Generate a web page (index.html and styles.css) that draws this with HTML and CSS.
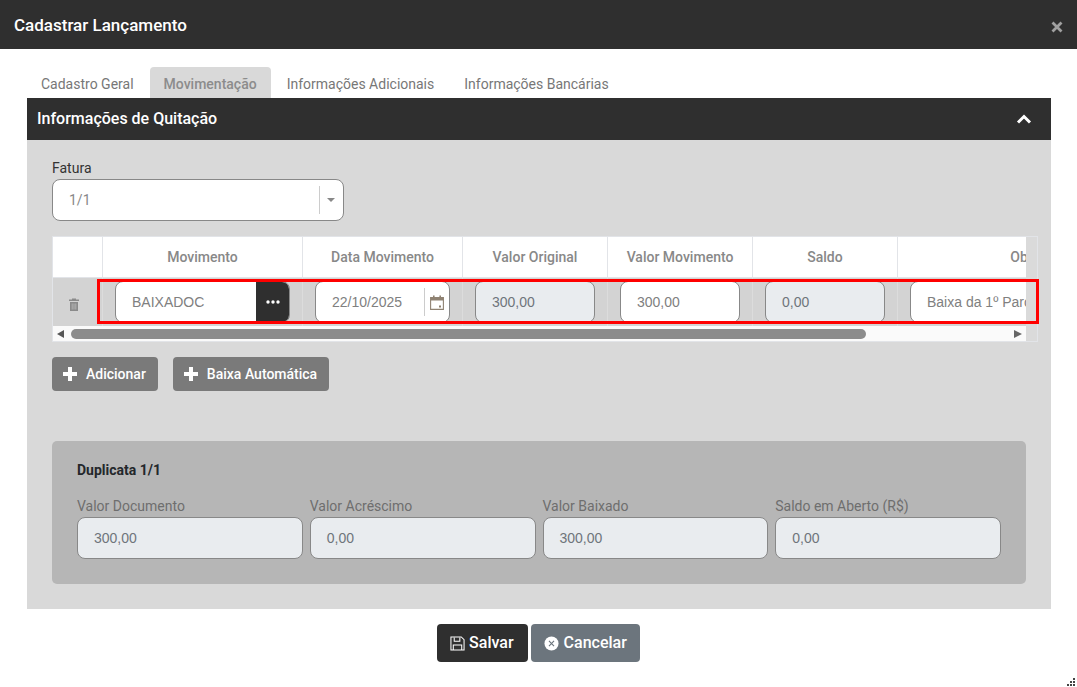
FILE: index.html
```html
<!DOCTYPE html>
<html lang="pt-BR">
<head>
<meta charset="utf-8">
<title>Cadastrar Lançamento</title>
<link rel="stylesheet" href="styles.css">
</head>
<body>
<div class="modal">
  <header class="modal-head">
    <h1 class="modal-title">Cadastrar Lançamento</h1>
    <svg class="close" viewBox="0 0 12 12" width="12" height="12"><path d="M1.5 1.5l9 9M10.5 1.5l-9 9" stroke="#a0a0a0" stroke-width="2.8" fill="none"/></svg>
  </header>
  <nav class="tabs">
    <span class="tab">Cadastro Geral</span>
    <span class="tab tab-active">Movimentação</span>
    <span class="tab">Informações Adicionais</span>
    <span class="tab">Informações Bancárias</span>
  </nav>
  <section class="panel">
    <div class="panel-head">
      <h2 class="panel-title">Informações de Quitação</h2>
      <svg class="chev" viewBox="0 0 16 10" width="16" height="10"><path d="M2 8.5l6-6 6 6" stroke="#fff" stroke-width="3" fill="none"/></svg>
    </div>
    <div class="panel-body">
      <label class="label label-dark">Fatura</label>
      <div class="select">
        <span class="select-value">1/1</span>
        <span class="select-sep"></span>
        <span class="select-caret"></span>
      </div>
      <div class="grid">
        <div class="grid-view">
          <div class="grid-row grid-head">
            <div class="cell"></div>
            <div class="cell">Movimento</div>
            <div class="cell">Data Movimento</div>
            <div class="cell">Valor Original</div>
            <div class="cell">Valor Movimento</div>
            <div class="cell">Saldo</div>
            <div class="cell">Observação</div>
          </div>
          <div class="grid-row grid-body">
            <div class="cell cell-icon">
              <svg viewBox="0 0 12 13" width="12" height="13"><path d="M1 1.5h3V.5h4v1h3v1.5H1zM2 4h8v9H2z" fill="#8a8a8a"/><path d="M4.2 5.5v6M6 5.5v6M7.8 5.5v6" stroke="#c4c4c4" stroke-width=".7"/></svg>
            </div>
            <div class="cell cell-input">
              <div class="input input-group"><span class="input-text">BAIXADOC</span>
                <span class="dots"><svg viewBox="0 0 14 4" width="14" height="4"><circle cx="2" cy="2" r="1.7" fill="#fff"/><circle cx="7" cy="2" r="1.7" fill="#fff"/><circle cx="12" cy="2" r="1.7" fill="#fff"/></svg></span>
              </div>
            </div>
            <div class="cell cell-input">
              <div class="input input-date"><span class="input-text">22/10/2025</span>
                <span class="date-sep"></span>
                <svg class="cal" viewBox="0 0 14 15" width="14" height="15"><path d="M.6 2.6h12.8v11.8H.6z" fill="none" stroke="#8f8272" stroke-width="1.1"/><path d="M.6 2.6h12.8v3H.6zM3 .5h1.6v3H3zM9.4.5H11v3H9.4z" fill="#8f8272"/><rect x="9" y="10.5" width="2" height="2" fill="#8f8272"/></svg>
              </div>
            </div>
            <div class="cell cell-input"><div class="input input-off"><span class="input-text">300,00</span></div></div>
            <div class="cell cell-input"><div class="input"><span class="input-text">300,00</span></div></div>
            <div class="cell cell-input"><div class="input input-off"><span class="input-text">0,00</span></div></div>
            <div class="cell cell-input"><div class="input"><span class="input-text">Baixa da 1º Parcela</span></div></div>
          </div>
          <div class="scrollbar">
            <span class="arrow arrow-left"></span>
            <span class="thumb"></span>
            <span class="arrow arrow-right"></span>
          </div>
        </div>
        <div class="highlight"></div>
      </div>
      <div class="actions">
        <button class="btn-grey"><svg viewBox="0 0 14 14" width="14" height="14"><path d="M5 0h4v5h5v4H9v5H5V9H0V5h5z" fill="#fff"/></svg>Adicionar</button>
        <button class="btn-grey"><svg viewBox="0 0 14 14" width="14" height="14"><path d="M5 0h4v5h5v4H9v5H5V9H0V5h5z" fill="#fff"/></svg>Baixa Automática</button>
      </div>
      <div class="card">
        <h3 class="card-title">Duplicata 1/1</h3>
        <div class="card-grid">
          <div class="field"><label class="label">Valor Documento</label><div class="input input-off input-full"><span class="input-text">300,00</span></div></div>
          <div class="field"><label class="label">Valor Acréscimo</label><div class="input input-off input-full"><span class="input-text">0,00</span></div></div>
          <div class="field"><label class="label">Valor Baixado</label><div class="input input-off input-full"><span class="input-text">300,00</span></div></div>
          <div class="field"><label class="label">Saldo em Aberto (R$)</label><div class="input input-off input-full"><span class="input-text">0,00</span></div></div>
        </div>
      </div>
    </div>
  </section>
  <footer class="modal-foot">
    <button class="btn btn-dark"><svg viewBox="0 0 16 16" width="15" height="15"><path d="M1 1h11l3 3v11H1z" fill="none" stroke="#fff" stroke-width="1.1"/><path d="M4.5 1.5v4h6v-4M3.5 15V9.5h9V15" fill="none" stroke="#fff" stroke-width="1.1"/></svg><span class="btn-text">Salvar</span></button>
    <button class="btn btn-muted"><svg viewBox="0 0 16 16" width="15" height="15"><circle cx="8" cy="8" r="7.5" fill="#fff"/><path d="M5.3 5.3l5.4 5.4M10.7 5.3l-5.4 5.4" stroke="#6c757d" stroke-width="1.2"/></svg><span class="btn-text">Cancelar</span></button>
  </footer>
  <svg class="grip" viewBox="0 0 10 10" width="10" height="10"><path d="M7 1h2v2H7zM4 4h2v2H4zM7 4h2v2H7zM1 7h2v2H1zM4 7h2v2H4zM7 7h2v2H7z" fill="#444"/></svg>
</div>
</body>
</html>
```

FILE: styles.css
```css
* { box-sizing: border-box; }
html, body { margin: 0; height: 100%; background: #fff; }
body { font-family: Roboto, "Liberation Sans", sans-serif; font-size: 14px; color: #333; overflow: hidden; }
.modal { position: relative; width: 1077px; height: 687px; }
.modal-head { height: 49px; background: #2f2f2f; display: flex; align-items: center; justify-content: space-between; padding: 0 14px; }
.modal-title { margin: 0; font-size: 17px; font-weight: 500; color: #fff; }
.close { margin-top: 5px; }
.tabs { display: flex; gap: 2px; height: 31px; margin-top: 18px; padding-left: 27px; }
.tab { padding: 0 14px; line-height: 34px; color: #777; white-space: nowrap; border-radius: 4px 4px 0 0; }
.tab:first-child { margin-right: 1px; }
.tab-active { background: #d9d9d9; color: #8c8c8c; font-weight: 500; margin-left: -1px; }
.panel { margin: 0 26px 0 27px; background: #d9d9d9; height: 511px; }
.panel-head { height: 42px; background: #2f2f2f; display: flex; align-items: center; justify-content: space-between; padding: 0 19px 0 10px; }
.panel-title { margin: 0 0 2px; font-size: 16px; font-weight: 500; color: #fff; }
.panel-body { padding: 20px 25px 0; }
.label { display: block; font-size: 14px; line-height: 17px; color: #6e6e6e; white-space: nowrap; }
.label-dark { color: #333; }
.select { width: 292px; height: 42px; margin-top: 2px; background: #fff; border: 1px solid #888; border-radius: 8px; display: flex; align-items: center; padding-left: 16px; }
.select-value { flex: 1; color: #888; }
.select-sep { width: 1px; height: 28px; background: #ccc; }
.select-caret { width: 0; height: 0; margin: 0 8px 0 7px; border: 4px solid transparent; border-top-color: #888; border-bottom: 0; }
.grid { position: relative; width: 986px; height: 106px; margin-top: 15px; background: #dadada; border: 1px solid #e2e4e8; }
.grid-view { width: 973px; height: 104px; overflow: hidden; background: #fafafa; }
.grid-row { display: grid; grid-template-columns: 50px 200px 160px 145px 145px 145px 300px; width: 1145px; }
.grid-head { height: 41px; background: #fff; border-bottom: 1px solid #e2e4e8; }
.grid-head .cell { display: flex; align-items: center; justify-content: center; color: #888; font-weight: 500; border-right: 1px solid #e2e4e8; }
.grid-body { height: 48px; background: #d3d3d3; overflow: hidden; }
.cell-input { padding: 3px 12px 0; border-right: 1px solid #dcdcdc; }
.cell-icon { display: flex; align-items: center; justify-content: center; padding: 4px 8px 0 0; border-right: 1px solid #dcdcdc; }
.input { height: 42px; background: #fff; border: 1px solid #888; border-radius: 8px; display: flex; align-items: center; overflow: hidden; }
.input-text { padding-left: 16px; color: #808080; white-space: nowrap; flex: 1; font-family: "Liberation Sans", Arial, sans-serif; }
.input-off { background: #e9ecef; }
.input-off .input-text { color: #6f757b; }
.dots { width: 33px; height: 100%; background: #2f2f2f; display: flex; align-items: center; justify-content: center; flex: none; }
.date-sep { width: 1px; height: 28px; background: #ccc; flex: none; }
.cal { margin: 0 5px; flex: none; }
.scrollbar { height: 15px; padding: 3px 4px 0; display: flex; align-items: flex-start; background: #fafafa; }
.thumb { width: 795px; height: 10px; margin-left: 7px; background: #8c8c8c; border-radius: 5px; }
.arrow { width: 0; height: 0; margin-top: 1px; border: 4px solid transparent; }
.arrow-left { border-right: 7px solid #555; border-left: 0; }
.arrow-right { border-left: 8px solid #666; border-right: 0; margin-left: 148px; }
.highlight { position: absolute; left: 44px; top: 42px; width: 942px; height: 45px; border: 3px solid #f00; pointer-events: none; }
.actions { display: flex; gap: 15px; margin-top: 15px; }
.btn-grey { height: 34px; padding: 0 12px 0 11px; background: #7a7a7a; color: #fff; border: 0; border-radius: 4px; font: 500 14px Roboto, "Liberation Sans", sans-serif; display: flex; align-items: center; gap: 9px; }
.card { width: 974px; height: 143px; margin-top: 50px; padding: 20px 25px 0; background: #b6b6b6; border-radius: 5px; }
.card-title { margin: 0; font-size: 14px; font-weight: 700; line-height: 18px; color: #24272b; }
.card-grid { display: grid; grid-template-columns: repeat(4, 1fr); gap: 7px; margin-top: 19px; }
.field { min-width: 0; }
.input-full { width: 100%; margin-top: 2px; }
.modal-foot { display: flex; justify-content: center; gap: 3px; padding-top: 15px; }
.btn { height: 38px; padding: 0 13px; border: 0; border-radius: 4px; color: #fff; font: 500 16px Roboto, "Liberation Sans", sans-serif; display: flex; align-items: center; gap: 4px; }
.btn-text { margin-bottom: 2px; }
.btn-dark { background: #2f2f2f; padding-right: 14px; }
.btn-muted { background: #6c757d; gap: 5px; }
.grip { position: absolute; right: 1px; bottom: 0; }
```
